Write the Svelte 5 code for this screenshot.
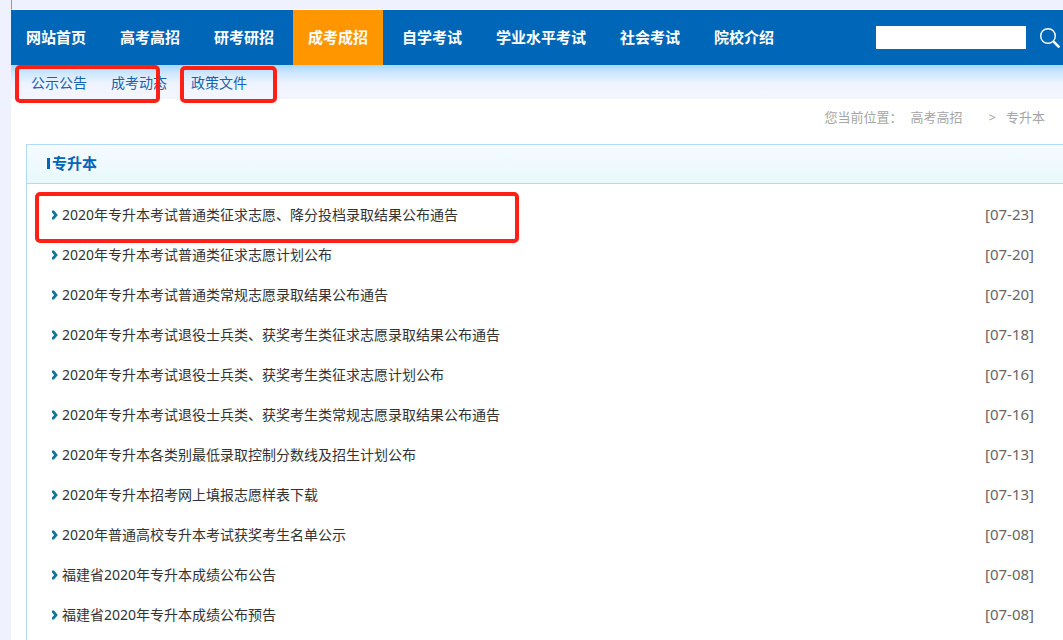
<script lang="ts">
  /**
   * 栏目列表页：主导航、子导航、面包屑和公告列表
   */
  const navItems = [
    "网站首页",
    "高考高招",
    "研考研招",
    "成考成招",
    "自学考试",
    "学业水平考试",
    "社会考试",
    "院校介绍",
  ];
  const activeItem = "成考成招";

  const subItems = ["公示公告", "成考动态", "政策文件"];

  const notices = [
    { title: "2020年专升本考试普通类征求志愿、降分投档录取结果公布通告", date: "07-23", marked: true },
    { title: "2020年专升本考试普通类征求志愿计划公布", date: "07-20" },
    { title: "2020年专升本考试普通类常规志愿录取结果公布通告", date: "07-20" },
    { title: "2020年专升本考试退役士兵类、获奖考生类征求志愿录取结果公布通告", date: "07-18" },
    { title: "2020年专升本考试退役士兵类、获奖考生类征求志愿计划公布", date: "07-16" },
    { title: "2020年专升本考试退役士兵类、获奖考生类常规志愿录取结果公布通告", date: "07-16" },
    { title: "2020年专升本各类别最低录取控制分数线及招生计划公布", date: "07-13" },
    { title: "2020年专升本招考网上填报志愿样表下载", date: "07-13" },
    { title: "2020年普通高校专升本考试获奖考生名单公示", date: "07-08" },
    { title: "福建省2020年专升本成绩公布公告", date: "07-08" },
    { title: "福建省2020年专升本成绩公布预告", date: "07-08" },
  ];

  let keyword = $state("");
</script>

<div class="page">
  <div class="top-strip"></div>

  <header class="nav-bar">
    <nav class="nav">
      {#each navItems as item}
        <a href="#nav" class="nav-link" class:active={item === activeItem}>{item}</a>
      {/each}
    </nav>
    <form class="search" onsubmit={(e) => e.preventDefault()}>
      <input class="search-input" type="text" aria-label="搜索" bind:value={keyword} />
      <button class="search-button" type="submit" aria-label="搜索">
        <svg width="20" height="20" viewBox="0 0 20 20" fill="none" stroke="#fff">
          <circle cx="8" cy="8" r="7.3" stroke-width="1.4" />
          <path d="M13 13l2 2" stroke-width="1.6" />
          <path d="M14.4 14.4l4.2 4.2" stroke-width="2.6" stroke-linecap="round" />
        </svg>
      </button>
    </form>
  </header>

  <nav class="sub-nav">
    {#each subItems as item}
      <a href="#sub" class="sub-link">{item}</a>
    {/each}
    <span class="mark mark-news"></span>
    <span class="mark mark-policy"></span>
  </nav>

  <div class="breadcrumb">
    <span>您当前位置：</span>
    <a href="#parent" class="crumb">高考高招</a>
    <span class="separator">&gt;</span>
    <a href="#current" class="crumb">专升本</a>
  </div>

  <main class="panel">
    <h2 class="panel-title">专升本</h2>
    <ul class="list">
      {#each notices as notice}
        <li class="row">
          <svg class="arrow" width="6" height="12" viewBox="0 -2 6 12">
            <path d="M0 0.5h2l3.8 4.5l-3.8 4.5h-2v-2l2.2-2.5l-2.2-2.5z" fill="#0a7698" />
          </svg>
          <a href="#notice" class="title">{notice.title}</a>
          <span class="date">[{notice.date}]</span>
          {#if notice.marked}
            <span class="mark mark-row"></span>
          {/if}
        </li>
      {/each}
    </ul>
  </main>
</div>

<style>
  :global(body) {
    background: #f0f1ff;
  }

  .page {
    display: flex;
    flex-direction: column;
    box-sizing: border-box;
    min-height: 100vh;
    margin-left: 11px;
    background: #fff;
    font-family: "Noto Sans", "Noto Sans CJK SC", sans-serif;
    font-size: 14px;
  }

  a {
    color: inherit;
    text-decoration: none;
  }

  .top-strip {
    height: 9px;
    border-left: 1px solid #999;
    border-bottom: 1px solid #fff;
    background: #f0f1ff;
  }

  /* 主导航 */
  .nav-bar {
    display: flex;
    justify-content: space-between;
    height: 55px;
    background: #0066b7;
  }

  .nav {
    display: flex;
    gap: 4px;
  }

  .nav-link {
    padding: 0 15px;
    color: #fff;
    font-size: 15px;
    font-weight: bold;
    line-height: 55px;
    white-space: nowrap;
  }

  .nav-link.active {
    background: #ff9600;
  }

  .search {
    display: flex;
    align-items: center;
    gap: 14px;
    padding-right: 3px;
  }

  .search-input {
    box-sizing: border-box;
    width: 150px;
    height: 23px;
    padding: 0 4px;
    border: 0;
    border-radius: 0;
    background: #fff;
    font: inherit;
  }

  .search-button {
    display: flex;
    padding: 0;
    border: 0;
    background: none;
    cursor: pointer;
  }

  /* 子导航 */
  .sub-nav {
    position: relative;
    display: flex;
    gap: 24px;
    height: 34px;
    padding-left: 20px;
    background: linear-gradient(#a6d8ff, #d2e8ff 9px, #ecf3ff 18px, #f2f4ff 25px);
    color: #1463ae;
    line-height: 36px;
  }

  .breadcrumb {
    display: flex;
    padding-right: 18px;
    justify-content: flex-end;
    height: 45px;
    color: #a5a5a5;
    font-size: 13px;
    line-height: 36px;
  }

  .crumb {
    margin-left: 8px;
  }

  .separator {
    margin: 0 2px 0 26px;
  }

  /* 列表面板 */
  .panel {
    flex: 1;
    margin-left: 15px;
    border: 1px solid #b3d9ff;
    border-width: 1px 0 0 1px;
  }

  .panel-title {
    display: flex;
    align-items: center;
    gap: 2px;
    margin: 0;
    padding-left: 20px;
    padding-bottom: 2px;
    border-bottom: 1px solid #b3d9ff;
    background: linear-gradient(#f5fbff, #e8f8fc);
    color: #0066b7;
    font-size: 15px;
    line-height: 36px;
  }

  .panel-title::before {
    content: "";
    width: 3px;
    height: 11px;
    background: #0066b7;
  }

  .list {
    margin: 0;
    padding: 10px 29px 0 25px;
    list-style: none;
  }

  .row {
    position: relative;
    display: flex;
    align-items: center;
    height: 40px;
  }

  .arrow {
    flex: none;
    margin-right: 4px;
  }

  .title {
    flex: 1;
    color: #333;
  }

  .date {
    color: #666;
    font-size: 15px;
  }

  /* 红色标注框 */
  .mark {
    position: absolute;
    box-sizing: border-box;
    border: 4px solid #ff2015;
    border-radius: 5px;
    pointer-events: none;
  }

  .mark-news {
    top: 0;
    left: 4px;
    width: 145px;
    height: 38px;
  }

  .mark-policy {
    top: 1px;
    left: 169px;
    width: 97px;
    height: 37px;
  }

  .mark-row {
    top: -2px;
    left: -17px;
    width: 484px;
    height: 51px;
  }
</style>
